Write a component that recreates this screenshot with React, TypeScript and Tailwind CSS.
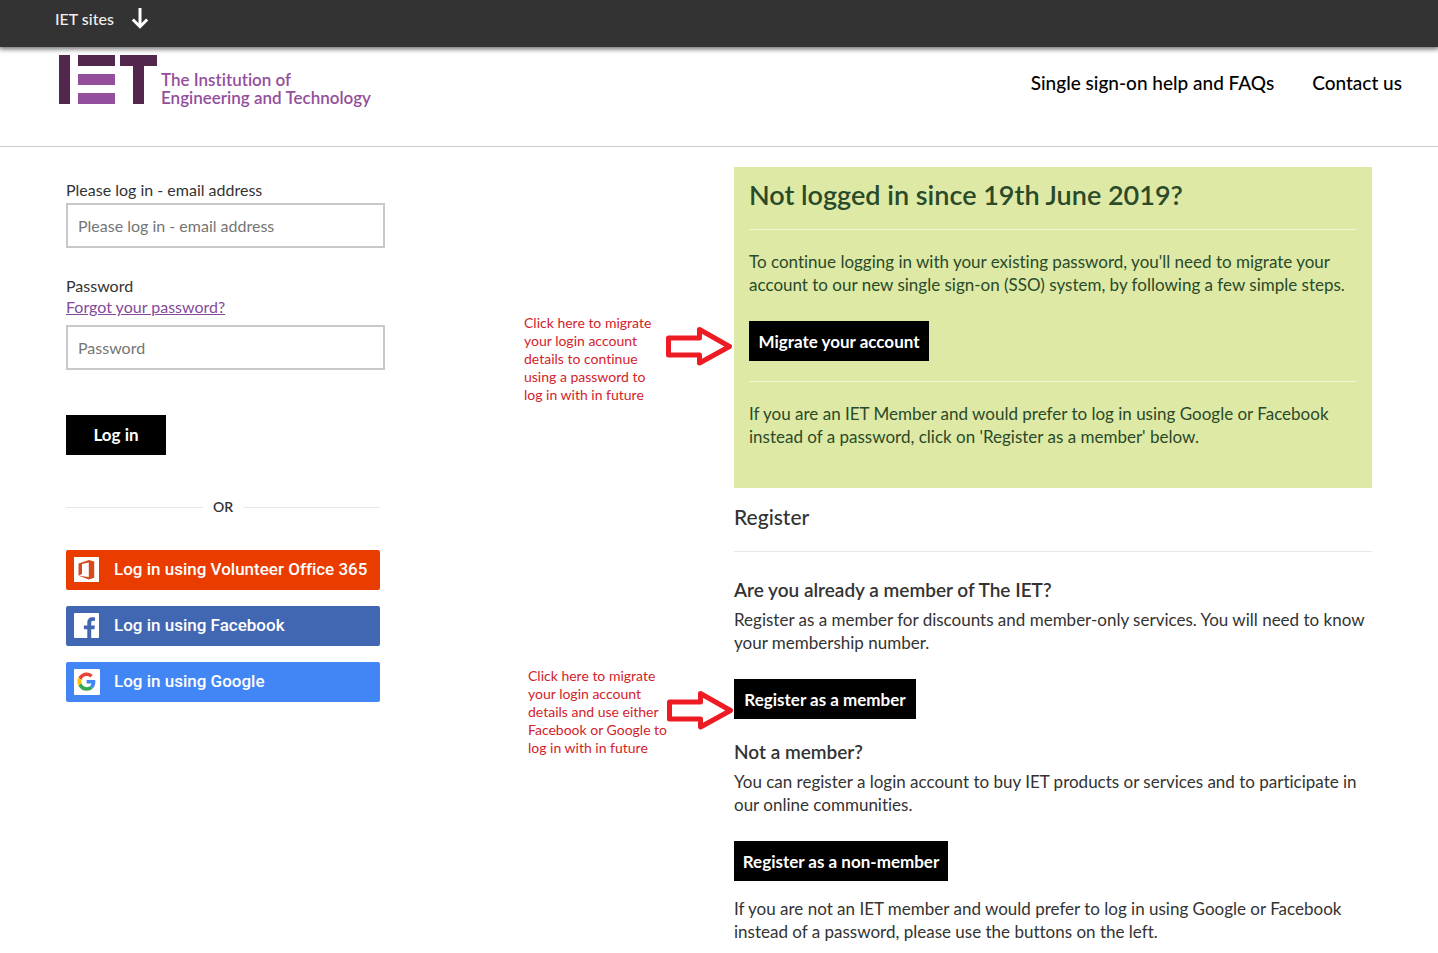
import React, { useState } from "react";

const IconArrowDown = () => (
  <svg width="18" height="22" viewBox="0 0 18 22" fill="none" stroke="#fff" strokeWidth="3" aria-hidden="true">
    <path d="M9 0v19M1.800 11.500L9 18.700l7.200-7.200" />
  </svg>
);

const LogoMark = () => (
  <svg width="98" height="50" viewBox="0 0 98 50" aria-hidden="true">
    <path fill="#52264d" d="M0 0h11v49H0zM19 0h37v11H19zM61 0h37v11H85v38H74V11H61z" />
    <path fill="#934f9c" d="M19 19h37v11H19zM19 38h37v11H19z" />
  </svg>
);

const IconOffice = () => (
  <svg width="26" height="26" viewBox="0 0 26 26" aria-hidden="true">
    <path fill="#fff" d="M0 0h25v25H0z" />
    <path fill="#d64b1c" d="M4.500 6.500L15 3l5.200 1.500v16.300L15 22.500 4.500 18.700l10.300 1.200V5.500L8 7.100v10l-3.500 1.600z" />
  </svg>
);

const IconFacebook = () => (
  <svg width="26" height="26" viewBox="0 0 26 26" aria-hidden="true">
    <rect width="25" height="25" rx="1" fill="#fff" />
    <path fill="#4267b2" d="M13.300 25v-8.800H9.900v-3.800h3.400V9.600c0-3.400 2.100-5.400 5.100-5.400 1.200 0 2.200.1 2.600.2v3.300h-1.900c-1.500 0-1.900.8-1.900 1.900v2.800h3.700l-.5 3.800h-3.200V25z" />
  </svg>
);

const IconGoogle = () => (
  <svg width="26" height="26" viewBox="0 0 26 26" aria-hidden="true">
    <rect width="26" height="26" rx="1" fill="#fff" />
    <g transform="translate(3.500 3.500) scale(0.38)">
      <path fill="#EA4335" d="M24 9.500c3.540 0 6.710 1.220 9.210 3.600l6.850-6.850C35.900 2.380 30.470 0 24 0 14.620 0 6.510 5.380 2.560 13.220l7.980 6.190C12.430 13.720 17.740 9.500 24 9.500z" />
      <path fill="#4285F4" d="M46.980 24.550c0-1.570-.15-3.090-.38-4.550H24v9.020h12.940c-.58 2.960-2.260 5.480-4.780 7.180l7.730 6c4.510-4.180 7.090-10.360 7.090-17.650z" />
      <path fill="#FBBC05" d="M10.530 28.590c-.48-1.450-.76-2.990-.76-4.590s.27-3.140.76-4.590l-7.980-6.190C.92 16.460 0 20.120 0 24c0 3.880.92 7.540 2.560 10.780l7.970-6.190z" />
      <path fill="#34A853" d="M24 48c6.480 0 11.930-2.130 15.890-5.810l-7.730-6c-2.150 1.450-4.920 2.300-8.160 2.300-6.260 0-11.570-4.220-13.470-9.910l-7.980 6.190C6.510 42.620 14.620 48 24 48z" />
    </g>
  </svg>
);

const IconPointer = () => (
  <svg width="68" height="42" viewBox="0 0 68 42" fill="none" stroke="#ed1c24" strokeWidth="5" strokeLinejoin="round" aria-hidden="true">
    <path d="M2.500 13H33.500V4.500L63.500 21.500 33.500 38V30H2.500z" />
  </svg>
);

const providers = [
  { id: "office", label: "Log in using Volunteer Office 365", color: "bg-[#eb3c00]", icon: <IconOffice /> },
  { id: "facebook", label: "Log in using Facebook", color: "bg-[#4267b2]", icon: <IconFacebook /> },
  { id: "google", label: "Log in using Google", color: "bg-[#4285f4]", icon: <IconGoogle /> },
];

const inputClass = "block w-full h-[45px] border-2 border-[#c8c8c8] px-[10px] text-base text-[#333] placeholder:text-[#757575] outline-none focus:border-[#934f9c]";
const buttonClass = "block h-10 bg-black text-white text-[17px] font-bold cursor-pointer";

export default function App() {
  const [email, setEmail] = useState("");
  const [password, setPassword] = useState("");

  return (
    <div className="bg-white text-[#333] font-['Lato',sans-serif] [font-variant-ligatures:no-common-ligatures]">

      {/* SITE SWITCHER */}
      <div className="relative h-[47px] bg-[#333] pl-[55px] pt-[7px] shadow-[0_1px_5px_1px_rgba(0,0,0,0.6)]">
        <button type="button" className="flex items-center gap-[17px] text-base font-medium text-[#f0f0f0] cursor-pointer">
          IET sites
          <IconArrowDown />
        </button>
      </div>

      {/* HEADER */}
      <header className="flex justify-between h-[100px] pl-[59px] pr-9 pt-2 border-b border-[#ccc]">
        <a href="#" className="flex gap-1">
          <LogoMark />
          <span className="pt-4 text-[17px] leading-[18px] font-semibold text-[#934f9c]">
            The Institution of<br />Engineering and Technology
          </span>
        </a>
        <nav className="flex gap-[38px] pt-4 text-[19px] leading-6 font-medium text-black">
          <a href="#">Single sign-on help and FAQs</a>
          <a href="#">Contact us</a>
        </nav>
      </header>

      <main className="grid grid-cols-[minmax(0,458fr)_210px_minmax(0,638fr)] px-[66px]">

        {/* LOGIN */}
        <section className="w-full max-w-[319px] pt-8">
          <form onSubmit={e => e.preventDefault()}>
            <label htmlFor="email" className="block text-base leading-[21px] mb-[3px]">Please log in - email address</label>
            <input id="email" type="email" placeholder="Please log in - email address" value={email} onChange={e => setEmail(e.target.value)} className={inputClass} />

            <label htmlFor="password" className="block text-base leading-[21px] mt-[27px]">Password</label>
            <a href="#" className="block w-fit text-base leading-[21px] mb-2 text-[#834a9a] underline">Forgot your password?</a>
            <input id="password" type="password" placeholder="Password" value={password} onChange={e => setPassword(e.target.value)} className={inputClass} />

            <button type="submit" className={`${buttonClass} w-[100px] mt-[45px]`}>Log in</button>
          </form>

          <div className="max-w-[314px]">
            <div className="flex items-center gap-[10px] mt-[42px] mb-[33px] text-sm leading-5 font-semibold">
              <span className="h-px flex-1 bg-[#e8e8e8]"></span>
              OR
              <span className="h-px flex-1 bg-[#e8e8e8]"></span>
            </div>
            <div className="flex flex-col gap-4">
              {providers.map(p => (
                <button key={p.id} type="button" className={`flex items-center gap-[14px] h-10 pl-2 rounded-[2px] text-white text-[17px] font-medium font-['Roboto',sans-serif] whitespace-nowrap cursor-pointer ${p.color}`}>
                  {p.icon}
                  {p.label}
                </button>
              ))}
            </div>
          </div>
        </section>

        {/* GUIDANCE NOTES */}
        <aside className="pt-[167px] text-sm leading-[18px] text-[#d2232a]">
          <div className="grid grid-cols-[1fr_68px]">
            <p className="whitespace-nowrap">
              Click here to migrate<br />your login account<br />details to continue<br />using a password to<br />log in with in future
            </p>
            <div className="pt-[11px]"><IconPointer /></div>
          </div>
          <div className="grid grid-cols-[1fr_68px] mt-[263px] pl-1">
            <p className="whitespace-nowrap">
              Click here to migrate<br />your login account<br />details and use either<br />Facebook or Google to<br />log in with in future
            </p>
            <div className="pt-[22px]"><IconPointer /></div>
          </div>
        </aside>

        {/* REGISTER */}
        <section className="pt-5 pb-[10px] text-[17px] leading-[23px]">
          <div className="bg-[#dde9a5] text-[#2a4a2a] px-[15px] pt-[11px] pb-10">
            <h1 className="text-[27px] leading-[34px] font-semibold">Not logged in since 19th June 2019?</h1>
            <hr className="border-[#f0f4d8] mt-[17px] mb-5" />
            <p>To continue logging in with your existing password, you'll need to migrate your account to our new single sign-on (SSO) system, by following a few simple steps.</p>
            <button type="button" className={`${buttonClass} w-[180px] mt-[25px]`}>Migrate your account</button>
            <hr className="border-[#f0f4d8] my-5" />
            <p>If you are an IET Member and would prefer to log in using Google or Facebook instead of a password, click on 'Register as a member' below.</p>
          </div>

          <h2 className="mt-[17px] text-[21px] leading-6 font-medium">Register</h2>
          <hr className="border-[#e8e8e8] mt-[22px] mb-[26px]" />

          <h3 className="text-[19px] leading-6 font-semibold">Are you already a member of The IET?</h3>
          <p className="mt-[6px]">Register as a member for discounts and member-only services. You will need to know your membership number.</p>
          <button type="button" className={`${buttonClass} w-[182px] mt-[25px]`}>Register as a member</button>

          <h3 className="mt-[21px] text-[19px] leading-6 font-semibold">Not a member?</h3>
          <p className="mt-[6px]">You can register a login account to buy IET products or services and to participate in our online communities.</p>
          <button type="button" className={`${buttonClass} w-[214px] mt-[25px]`}>Register as a non-member</button>
          <p className="mt-4">If you are not an IET member and would prefer to log in using Google or Facebook instead of a password, please use the buttons on the left.</p>
        </section>

      </main>
    </div>
  );
}
